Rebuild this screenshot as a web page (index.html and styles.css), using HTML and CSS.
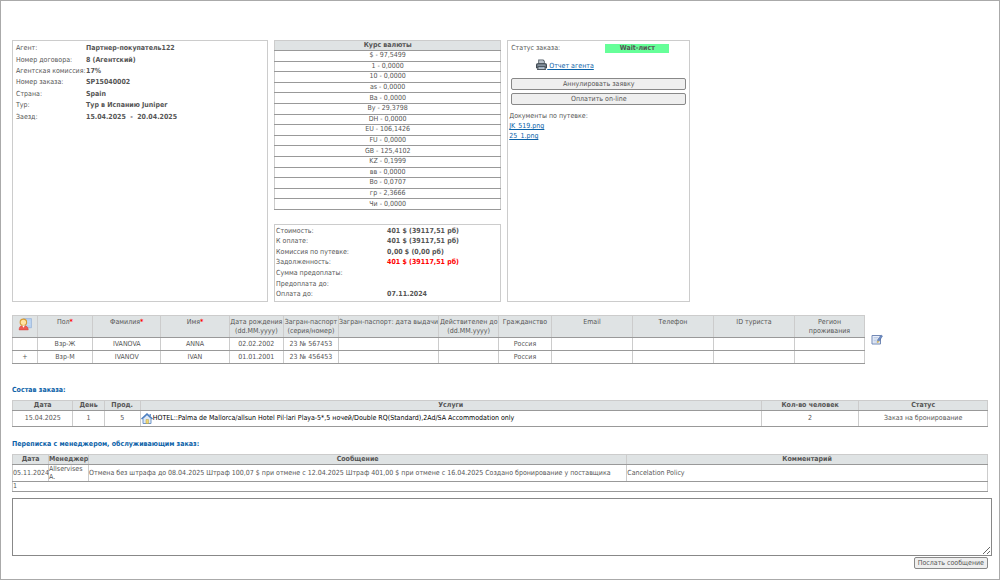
FILE: index.html
```html
<!DOCTYPE html>
<html lang="ru">
<head>
<meta charset="utf-8">
<title>Заказ SP15040002</title>
<link rel="stylesheet" href="styles.css">
</head>
<body>
<main class="page">
  <div class="summary">
    <section class="panel">
      <dl class="facts facts-order">
        <dt>Агент:</dt><dd>Партнер-покупатель122</dd>
        <dt>Номер договора:</dt><dd>8 (Агентский)</dd>
        <dt>Агентская комиссия:</dt><dd>17%</dd>
        <dt>Номер заказа:</dt><dd>SP15040002</dd>
        <dt>Страна:</dt><dd>Spain</dd>
        <dt>Тур:</dt><dd>Тур в Испанию Juniper</dd>
        <dt>Заезд:</dt><dd>15.04.2025 &nbsp;- &nbsp;20.04.2025</dd>
      </dl>
    </section>

    <div class="money">
      <table class="grid rates">
        <thead><tr><th>Курс валюты</th></tr></thead>
        <tbody>
          <tr><td>$ - 97,5499</td></tr>
          <tr><td>1 - 0,0000</td></tr>
          <tr><td>10 - 0,0000</td></tr>
          <tr><td>as - 0,0000</td></tr>
          <tr><td>Ba - 0,0000</td></tr>
          <tr><td>By - 29,3798</td></tr>
          <tr><td>DH - 0,0000</td></tr>
          <tr><td>EU - 106,1426</td></tr>
          <tr><td>FU - 0,0000</td></tr>
          <tr><td>GB - 125,4102</td></tr>
          <tr><td>KZ - 0,1999</td></tr>
          <tr><td>вв - 0,0000</td></tr>
          <tr><td>Во - 0,0707</td></tr>
          <tr><td>гр - 2,3666</td></tr>
          <tr><td>Чи - 0,0000</td></tr>
        </tbody>
      </table>
      <section class="panel">
        <dl class="facts facts-cost">
          <dt>Стоимость:</dt><dd>401 $ (39117,51 рб)</dd>
          <dt>К оплате:</dt><dd>401 $ (39117,51 рб)</dd>
          <dt>Комиссия по путевке:</dt><dd>0,00 $ (0,00 рб)</dd>
          <dt>Задолженность:</dt><dd class="debt">401 $ (39117,51 рб)</dd>
          <dt>Сумма предоплаты:</dt><dd></dd>
          <dt>Предоплата до:</dt><dd></dd>
          <dt>Оплата до:</dt><dd>07.11.2024</dd>
        </dl>
      </section>
    </div>

    <section class="panel status">
      <div class="status-row">
        <span>Статус заказа:</span>
        <strong class="badge">Wait-лист</strong>
      </div>
      <a class="report" href="#">
        <svg class="icon-print" viewBox="0 0 20 20" aria-hidden="true">
          <path d="M5 8V1h8l2 2v5z" fill="#dfe5ea" stroke="#59636d" stroke-width="2"/>
          <path d="M7 4h6M7 6h6" stroke="#8b97a3"/>
          <path d="M2 8h16l1 2v5H1v-5z" fill="#6f7c88" stroke="#3f4952" stroke-width="2"/>
          <path d="M3 10h14" stroke="#c4ccd4"/>
          <path d="M4 13h12l1 5H3z" fill="#e8edf2" stroke="#4d5760" stroke-width="2"/>
          <path d="M6 15h8" stroke="#5b87b5"/>
        </svg><span>&nbsp;Отчет агента</span></a>
      <button class="btn" type="button">Аннулировать заявку</button>
      <button class="btn" type="button">Оплатить on-line</button>
      <div class="docs">
        <span>Документы по путевке:</span>
        <a href="#">JK_519.png</a>
        <a href="#">25_1.png</a>
      </div>
    </section>
  </div>

  <div class="tourists">
    <table class="grid people">
      <colgroup>
        <col class="p-mark"><col class="p-sex"><col class="p-name"><col class="p-name"><col class="p-date"><col class="p-date"><col class="p-issue"><col class="p-valid"><col class="p-nation"><col class="p-wide"><col class="p-wide"><col class="p-wide"><col class="p-region">
      </colgroup>
      <thead>
        <tr>
          <th><svg class="icon-user" viewBox="0 0 26 24" role="img" aria-label="Туристы">
            <path d="M10 1h15v17H10z" fill="#b9d2f0" stroke="#86a5d2"/>
            <path d="M17 6h6M17 9h6M17 12h6" stroke="#d3e3f7"/>
            <path d="M2 22c0-6 3-8 8-8s9 2 9 8z" fill="#ee5a52" stroke="#d63f3b"/>
            <circle cx="10" cy="8" r="6" fill="#ffe3a3" stroke="#d79b35" stroke-width="2"/>
            <path d="M8 14l2 4 3-4z" fill="#fff"/>
          </svg></th>
          <th>Пол<span class="req">*</span></th>
          <th>Фамилия<span class="req">*</span></th>
          <th>Имя<span class="req">*</span></th>
          <th>Дата рождения<br>(dd.MM.yyyy)</th>
          <th>Загран-паспорт<br>(серия/номер)</th>
          <th>Загран-паспорт: дата выдачи</th>
          <th>Действителен до<br>(dd.MM.yyyy)</th>
          <th>Гражданство</th>
          <th>Email</th>
          <th>Телефон</th>
          <th>ID туриста</th>
          <th>Регион<br>проживания</th>
        </tr>
      </thead>
      <tbody>
        <tr><td></td><td>Взр-Ж</td><td>IVANOVA</td><td>ANNA</td><td>02.02.2002</td><td>23 № 567453</td><td></td><td></td><td>Россия</td><td></td><td></td><td></td><td></td></tr>
        <tr><td>+</td><td>Взр-М</td><td>IVANOV</td><td>IVAN</td><td>01.01.2001</td><td>23 № 456453</td><td></td><td></td><td>Россия</td><td></td><td></td><td></td><td></td></tr>
      </tbody>
    </table>
    <button class="edit" type="button" aria-label="Редактировать">
      <svg class="icon-edit" viewBox="0 0 24 22" aria-hidden="true">
        <path d="M2 3h17v17H2z" fill="#e9effa" stroke="#7389b5" stroke-width="2"/>
        <path d="M5 7h9M5 10h8M5 13h6M5 16h6" stroke="#9db0d4"/>
        <path d="M12 17l1-5 7-10 3 2-7 11z" fill="#6f8fc6" stroke="#48659c"/>
        <path d="M12 18l1-5 4 3z" fill="#f0c75a"/>
      </svg>
    </button>
  </div>

  <h2>Состав заказа:</h2>
  <table class="grid services">
    <colgroup><col class="s-date"><col class="s-day"><col class="s-len"><col><col class="s-count"><col class="s-state"></colgroup>
    <thead>
      <tr><th>Дата</th><th>День</th><th>Прод.</th><th>Услуги</th><th>Кол-во человек</th><th>Статус</th></tr>
    </thead>
    <tbody>
      <tr>
        <td>15.04.2025</td><td>1</td><td>5</td>
        <td><div class="service"><svg class="icon-home" viewBox="0 0 24 22" aria-hidden="true">
          <path d="M4 11v10h16V11l-8-8z" fill="#dce8f7" stroke="#7196c9" stroke-width="2"/>
          <path d="M1 12L12 2l11 10" fill="none" stroke="#4c7fc0" stroke-width="3"/>
          <path d="M17 2h3v6l-3-3z" fill="#7196c9"/>
          <path d="M10 13h5v8h-5z" fill="#f1d66e" stroke="#b9a246"/>
        </svg><span>HOTEL::Palma de Mallorca/allsun Hotel Pil·lari Playa-5*,5 ночей/Double RQ(Standard),2Ad/SA Accommodation only</span></div></td>
        <td>2</td><td>Заказ на бронирование</td>
      </tr>
    </tbody>
  </table>

  <h2>Переписка с менеджером, обслуживающим заказ:</h2>
  <table class="grid messages">
    <colgroup><col class="m-date"><col class="m-who"><col><col class="m-note"></colgroup>
    <thead>
      <tr><th>Дата</th><th>Менеджер</th><th>Сообщение</th><th>Комментарий</th></tr>
    </thead>
    <tbody>
      <tr><td>05.11.2024</td><td class="who">Allservises A.</td><td>Отмена без штрафа до 08.04.2025 Штраф 100,07 $ при отмене с 12.04.2025 Штраф 401,00 $ при отмене с 16.04.2025 Создано бронирование у поставщика</td><td>Cancelation Policy</td></tr>
      <tr class="pager"><td colspan="4">1</td></tr>
    </tbody>
  </table>

  <form class="reply">
    <textarea aria-label="Сообщение менеджеру"></textarea>
    <button class="btn" type="button">Послать сообщение</button>
  </form>
</main>
</body>
</html>
```

FILE: styles.css
```css
* {
  box-sizing: border-box;
}

body {
  margin: 0;
  background: #fff;
  color: #555;
  font: 7px/9px "DejaVu Sans Condensed", Tahoma, "DejaVu Sans", sans-serif;
}

.page {
  min-height: 100vh;
  padding: 39px 11px 8px;
  border: 1px solid #aaa;
}

a {
  color: #0b62a8;
}

button,
textarea {
  font: inherit;
  color: inherit;
}

.summary {
  display: grid;
  grid-template-columns: 256fr 227fr 183fr;
  gap: 6px;
  width: 69.5%;
}

.panel {
  border: 1px solid #ccc;
}

.facts {
  display: grid;
  align-items: center;
  margin: 0;
  white-space: nowrap;
}

.facts dd {
  margin: 0;
  font-weight: bold;
}

.facts-order {
  grid-template-columns: 70px 1fr;
  min-height: 80px;
  margin: 2px 3px;
}

.facts-cost {
  grid-template-columns: 111px 1fr;
  min-height: 74px;
  margin: 1px;
}

.facts .debt {
  color: #f00;
}

.money {
  display: flex;
  flex-direction: column;
  justify-content: space-between;
  gap: 14px;
}

.grid {
  width: 100%;
  border-collapse: collapse;
  border: 1px solid #bbb;
}

.grid th,
.grid td {
  padding: 0;
  border: 1px solid #ccc;
  border-bottom-color: #999;
  text-align: center;
}

.grid th {
  background: #dfe3e4;
}

.rates {
  height: 170px;
}

.status {
  display: flex;
  flex-direction: column;
  gap: 3px;
  padding: 3px 3px 0;
}

.status-row {
  display: flex;
  justify-content: space-between;
  padding-right: 17px;
}

.badge {
  width: 64px;
  background: #66ff99;
  text-align: center;
}

.report {
  display: flex;
  align-items: end;
  margin: 3px 0 4px 25px;
}

.icon-print {
  width: 11px;
  height: 12px;
}

.btn {
  height: 12px;
  padding: 0 3px;
  border: 1px solid #888;
  border-radius: 2px;
  background: #efefef;
  line-height: 9px;
}

.docs {
  display: flex;
  flex-direction: column;
  align-items: start;
  gap: 1px;
  margin: 4px -2px 0;
}

.tourists {
  display: flex;
  align-items: center;
  gap: 6px;
  margin: 13px 0 22px;
}

.people,
.services,
.messages {
  table-layout: fixed;
}

.people {
  width: 87.4%;
  white-space: nowrap;
}

.people th {
  padding: 2px 0 1px;
  font-weight: normal;
  vertical-align: top;
}

.people td {
  height: 13px;
}

.p-mark { width: 2.9%; }
.p-sex { width: 6.5%; }
.p-name { width: 8%; }
.p-date { width: 6.4%; }
.p-issue { width: 11.8%; }
.p-valid { width: 7%; }
.p-nation { width: 6.2%; }
.p-wide { width: 9.5%; }
.p-region { width: 8.2%; }

.req {
  color: #f00;
  font-weight: bold;
}

.icon-user {
  width: 14px;
  height: 13px;
}

.edit {
  display: flex;
  padding: 0;
  border: 0;
  background: none;
}

.icon-edit {
  width: 12px;
  height: 11px;
}

h2 {
  margin: 0 0 5px;
  color: #0b62a8;
  font-size: 7px;
  line-height: 9px;
}

.services {
  margin-bottom: 13px;
}

.services td {
  height: 16px;
}

.s-date { width: 6.2%; }
.s-day { width: 3.2%; }
.s-len { width: 3.7%; }
.s-count { width: 10%; }
.s-state { width: 13.2%; }

.service {
  display: flex;
  align-items: center;
  color: #000;
  white-space: nowrap;
}

.icon-home {
  flex: none;
  width: 12px;
  height: 11px;
}

.messages td {
  height: 17px;
  text-align: left;
}

.messages .who {
  line-height: 8px;
}

.messages .pager td {
  height: 9px;
}

.m-date { width: 3.7%; }
.m-who { width: 4.1%; }
.m-note { width: 37%; }

.reply {
  display: flex;
  flex-direction: column;
  align-items: end;
  gap: 1px;
  margin-top: 6px;
}

.reply textarea {
  align-self: stretch;
  height: 58px;
  margin-right: -4px;
  padding: 2px;
  border: 1px solid #888;
  background: #fff;
}
```
